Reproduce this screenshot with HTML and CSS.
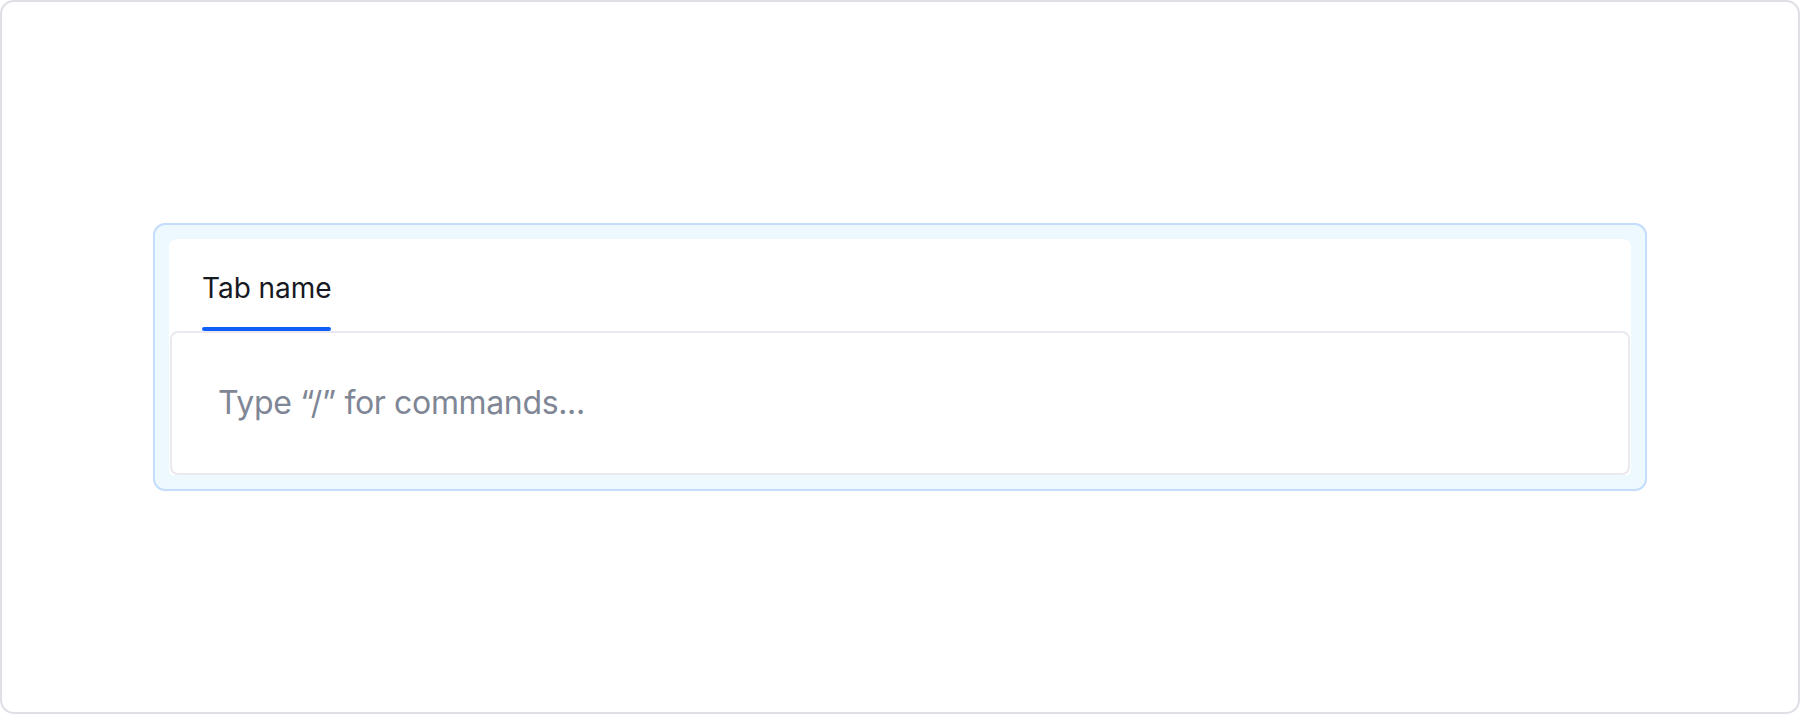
FILE: index.html
```html
<!DOCTYPE html>
<html lang="en">
<head>
<meta charset="utf-8">
<title>Tabs editor</title>
<link rel="stylesheet" href="styles.css">
</head>
<body>
<div class="frame">
  <div class="card">
    <div class="panel">
      <div class="tabs">
        <div class="tab">
          <span class="tab-label">Tab name</span>
          <span class="tab-indicator"></span>
        </div>
      </div>
      <div class="editor">
        <span class="placeholder">Type “/” for commands...</span>
      </div>
    </div>
  </div>
</div>
</body>
</html>
```
FILE: styles.css
```css
* { box-sizing: border-box; }
html, body { margin: 0; padding: 0; background: #ffffff; }
body { font-family: Inter, "Noto Sans", sans-serif; }
.frame {
  width: 1800px;
  height: 714px;
  border: 2px solid #dfdfe6;
  border-radius: 14px;
  display: flex;
  align-items: center;
  justify-content: center;
  background: #ffffff;
}
.card {
  width: 1494px;
  height: 268px;
  background: #eef8ff;
  border: 2px solid #c4ddfb;
  border-radius: 12px;
  padding: 14px;
  display: flex;
}
.panel {
  flex: 1;
  background: #ffffff;
  border-radius: 8px 8px 4px 4px;
  display: flex;
  flex-direction: column;
}
.tabs {
  display: flex;
  padding: 29px 32px 0 33px;
}
.tab {
  display: flex;
  flex-direction: column;
  align-items: stretch;
}
.tab-label {
  font-size: 28px;
  line-height: 40px;
  color: #161922;
  font-weight: 400;
  letter-spacing: -0.05px;
}
.tab-indicator {
  margin-top: 19px;
  height: 4px;
  border-radius: 2px;
  background: #0f5ef7;
}
.editor {
  flex: 1;
  margin: 0 1px;
  border: 2px solid #e9e9ef;
  border-radius: 8px;
  display: flex;
  align-items: center;
  padding: 0 46px;
}
.placeholder {
  font-size: 32px;
  line-height: 48px;
  color: #7f8796;
  letter-spacing: -0.35px;
}
```
